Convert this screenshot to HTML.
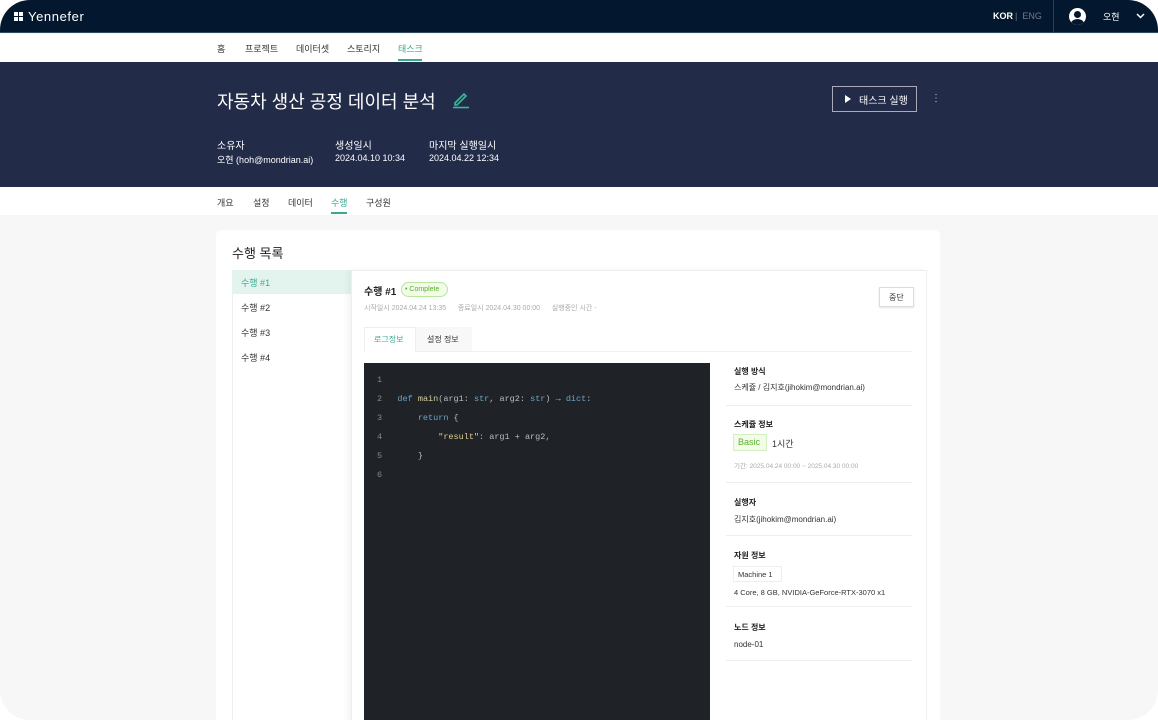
<!DOCTYPE html>
<html><head><meta charset="utf-8"><style>
*{box-sizing:border-box;margin:0;padding:0}
body{width:1158px;height:720px;overflow:hidden;background:#fff;font-family:"Liberation Sans","Noto Sans CJK KR",sans-serif;color:#222}
.page{position:absolute;left:0;top:0;width:1158px;height:720px;border-radius:30px;overflow:hidden;background:#f7f7f7}
.abs{position:absolute}
.top{left:0;top:0;width:1158px;height:33px;background:#03172e;border-bottom:1px solid #2d4a60}
.nav{left:0;top:34px;width:1158px;height:28px;background:#fff}
.hero{left:0;top:62px;width:1158px;height:125px;background:#222b48}
.sub{left:0;top:187px;width:1158px;height:28px;background:#fff}
.t{position:absolute;white-space:nowrap}
.mono{font-family:"Liberation Mono","DejaVu Sans Mono",monospace}
.sec{position:absolute;left:726px;width:186px;border-bottom:1px solid #eee}
</style></head><body><div class="page">
<div class="abs top">
 <div class="abs" style="left:14px;top:12px;width:9px;height:9px;background:
 linear-gradient(#fff,#fff) 0 0/4px 4px no-repeat,linear-gradient(#fff,#fff) 5px 0/4px 4px no-repeat,linear-gradient(#fff,#fff) 0 5px/4px 4px no-repeat,linear-gradient(#fff,#fff) 5px 5px/4px 4px no-repeat"></div>
 <div class="t" style="left:28px;top:9px;color:#fff;font-size:13px;letter-spacing:.6px">Yennefer</div>
 <div class="t" style="left:993px;top:11px;color:#fff;font-size:9px;font-weight:bold">KOR</div>
 <div class="t" style="left:1015px;top:11px;color:#778;font-size:9px">|&nbsp; ENG</div>
 <div class="abs" style="left:1053px;top:0;width:1px;height:33px;background:#2d4050"></div>
 <div class="abs" style="left:1069px;top:8px;width:17px;height:17px;border-radius:50%;background:#fff;overflow:hidden">
  <div class="abs" style="left:5px;top:3px;width:7px;height:7px;border-radius:50%;background:#03172e"></div>
  <div class="abs" style="left:2px;top:11px;width:13px;height:9px;border-radius:50%;background:#03172e"></div></div>
 <div class="t" style="left:1103px;top:10px;color:#fff;font-size:9px">오현</div>
 <svg class="abs" style="left:1136px;top:13px" width="9" height="6" viewBox="0 0 9 6"><path d="M1 1 L4.5 4.5 L8 1" fill="none" stroke="#fff" stroke-width="1.5"/></svg>
</div>
<div class="abs nav">
 <div class="t" style="left:217px;top:8px;font-size:9px;color:#333">홈</div>
 <div class="t" style="left:245px;top:8px;font-size:9px;color:#333">프로젝트</div>
 <div class="t" style="left:296px;top:8px;font-size:9px;color:#333">데이터셋</div>
 <div class="t" style="left:347px;top:8px;font-size:9px;color:#333">스토리지</div>
 <div class="t" style="left:398px;top:8px;font-size:9px;color:#3aa98f">태스크</div>
 <div class="abs" style="left:398px;top:25px;width:24px;height:2px;background:#3aa98f"></div>
</div>
<div class="abs hero">
 <div class="t" style="left:217px;top:26px;font-size:18px;color:#fff">자동차 생산 공정 데이터 분석</div>
 <svg class="abs" style="left:451px;top:27px" width="20" height="20" viewBox="0 0 20 20"><path d="M4 14 L13 5 L15 7 L6 16 L4 16 Z" fill="none" stroke="#3fb79a" stroke-width="1.6"/><path d="M2 18.5 H18" stroke="#3fb79a" stroke-width="1.6"/></svg>
 <div class="t" style="left:217px;top:75px;font-size:10px;color:#fff">소유자</div>
 <div class="t" style="left:217px;top:91px;font-size:9px;color:#fff">오현 (hoh@mondrian.ai)</div>
 <div class="t" style="left:335px;top:75px;font-size:10px;color:#fff">생성일시</div>
 <div class="t" style="left:335px;top:91px;font-size:9px;color:#fff">2024.04.10 10:34</div>
 <div class="t" style="left:429px;top:75px;font-size:10px;color:#fff">마지막 실행일시</div>
 <div class="t" style="left:429px;top:91px;font-size:9px;color:#fff">2024.04.22 12:34</div>
 <div class="abs" style="left:832px;top:24px;width:85px;height:26px;border:1px solid #aab;"></div>
 <div class="abs" style="left:845px;top:33px;width:0;height:0;border-left:6px solid #fff;border-top:4px solid transparent;border-bottom:4px solid transparent"></div>
 <div class="t" style="left:859px;top:30px;font-size:10px;color:#fff">태스크 실행</div>
 <div class="t" style="left:931px;top:31px;font-size:10px;color:#ccd">⋮</div>
</div>
<div class="abs sub">
 <div class="t" style="left:217px;top:9px;font-size:9px;color:#333">개요</div>
 <div class="t" style="left:253px;top:9px;font-size:9px;color:#333">설정</div>
 <div class="t" style="left:288px;top:9px;font-size:9px;color:#333">데이터</div>
 <div class="t" style="left:331px;top:9px;font-size:9px;color:#3aa98f">수행</div>
 <div class="t" style="left:366px;top:9px;font-size:9px;color:#333">구성원</div>
 <div class="abs" style="left:331px;top:25px;width:16px;height:2px;background:#3aa98f"></div>
</div>
<div class="abs" style="left:216px;top:230px;width:724px;height:500px;background:#fff;border-radius:6px"></div>
<div class="t" style="left:232px;top:243px;font-size:13px;color:#222">수행 목록</div>
<div class="abs" style="left:232px;top:270px;width:119px;height:460px;border:1px solid #eee;border-right:none;background:#fff"></div>
<div class="abs" style="left:232px;top:270px;width:119px;height:24px;background:#e3f4ef"></div>
<div class="t" style="left:241px;top:276px;font-size:9px;color:#3aa98f">수행 #1</div>
<div class="t" style="left:241px;top:301px;font-size:9px;color:#333">수행 #2</div>
<div class="t" style="left:241px;top:326px;font-size:9px;color:#333">수행 #3</div>
<div class="t" style="left:241px;top:351px;font-size:9px;color:#333">수행 #4</div>
<div class="abs" style="left:351px;top:270px;width:576px;height:460px;background:#fff;border:1px solid #eee;box-shadow:-3px 0 6px rgba(0,0,0,.05)"></div>
<div class="t" style="left:364px;top:283px;font-size:10px;font-weight:bold;color:#222">수행 #1</div>
<div class="abs" style="left:401px;top:282px;width:47px;height:15px;border:1px solid #b7e59b;background:#f2fce9;border-radius:8px"></div>
<div class="t" style="left:405px;top:285px;font-size:7px;line-height:9px;color:#5cb030">• Complete</div>
<div class="t" style="left:364px;top:303px;font-size:7px;color:#aaa">시작일시 2024.04.24 13:35 &nbsp;&nbsp;&nbsp;&nbsp; 종료일시 2024.04.30 00:00 &nbsp;&nbsp;&nbsp;&nbsp; 실행중인 시간 -</div>
<div class="abs" style="left:879px;top:287px;width:35px;height:20px;border:1px solid #ddd;box-shadow:0 1px 2px rgba(0,0,0,.1)"></div>
<div class="t" style="left:889px;top:292px;font-size:8px;color:#333">중단</div>
<div class="abs" style="left:364px;top:351px;width:548px;height:1px;background:#f0f0f0"></div>
<div class="abs" style="left:364px;top:327px;width:52px;height:25px;background:#fff;border:1px solid #eee;border-bottom:none"></div>
<div class="abs" style="left:416px;top:327px;width:56px;height:24px;background:#f8f8f8"></div>
<div class="t" style="left:374px;top:334px;font-size:8px;color:#3aa98f">로그정보</div>
<div class="t" style="left:427px;top:334px;font-size:8px;color:#333">설정 정보</div>
<div class="abs" style="left:364px;top:363px;width:346px;height:360px;background:#1f2327"></div>
<div class="mono" style="position:absolute;left:377px;top:371px;font-size:8.5px;line-height:19px;color:#bbb;white-space:pre"><span style="color:#888">1</span>
<span style="color:#888">2</span>   <span style="color:#6aa4c9">def</span> <span style="color:#d8d0a0">main</span>(arg1: <span style="color:#6aa4c9">str</span>, arg2: <span style="color:#6aa4c9">str</span>) → <span style="color:#6aa4c9">dict</span>:
<span style="color:#888">3</span>       <span style="color:#6aa4c9">return</span> {
<span style="color:#888">4</span>           <span style="color:#e0c990">"result"</span>: arg1 + arg2,
<span style="color:#888">5</span>       }
<span style="color:#888">6</span></div>
<div class="sec" style="top:352px;height:54px"></div>
<div class="t" style="left:734px;top:366px;font-size:8px;font-weight:bold">실행 방식</div>
<div class="t" style="left:734px;top:382px;font-size:8px;color:#333">스케쥴 / 김지호(jihokim@mondrian.ai)</div>
<div class="sec" style="top:406px;height:77px"></div>
<div class="t" style="left:734px;top:419px;font-size:8px;font-weight:bold">스케쥴 정보</div>
<div class="abs" style="left:733px;top:434px;width:34px;height:17px;background:#f2fce9;border:1px solid #d3efc0"></div>
<div class="t" style="left:738px;top:437px;font-size:9px;color:#5cb030">Basic</div>
<div class="t" style="left:772px;top:437px;font-size:9px;color:#333">1시간</div>
<div class="t" style="left:734px;top:460px;font-size:6.5px;color:#aaa">기간: 2025.04.24 00:00 ~ 2025.04.30 00:00</div>
<div class="sec" style="top:483px;height:53px"></div>
<div class="t" style="left:734px;top:497px;font-size:8px;font-weight:bold">실행자</div>
<div class="t" style="left:734px;top:514px;font-size:8px;color:#333">김지호(jihokim@mondrian.ai)</div>
<div class="sec" style="top:536px;height:71px"></div>
<div class="t" style="left:734px;top:550px;font-size:8px;font-weight:bold">자원 정보</div>
<div class="abs" style="left:733px;top:566px;width:49px;height:16px;border:1px solid #eee"></div>
<div class="t" style="left:738px;top:570px;font-size:7.5px;color:#333">Machine 1</div>
<div class="t" style="left:734px;top:588px;font-size:7.5px;color:#333">4 Core, 8 GB, NVIDIA-GeForce-RTX-3070 x1</div>
<div class="sec" style="top:607px;height:54px"></div>
<div class="t" style="left:734px;top:622px;font-size:8px;font-weight:bold">노드 정보</div>
<div class="t" style="left:734px;top:640px;font-size:8px;color:#333">node-01</div>
</div></body></html>
